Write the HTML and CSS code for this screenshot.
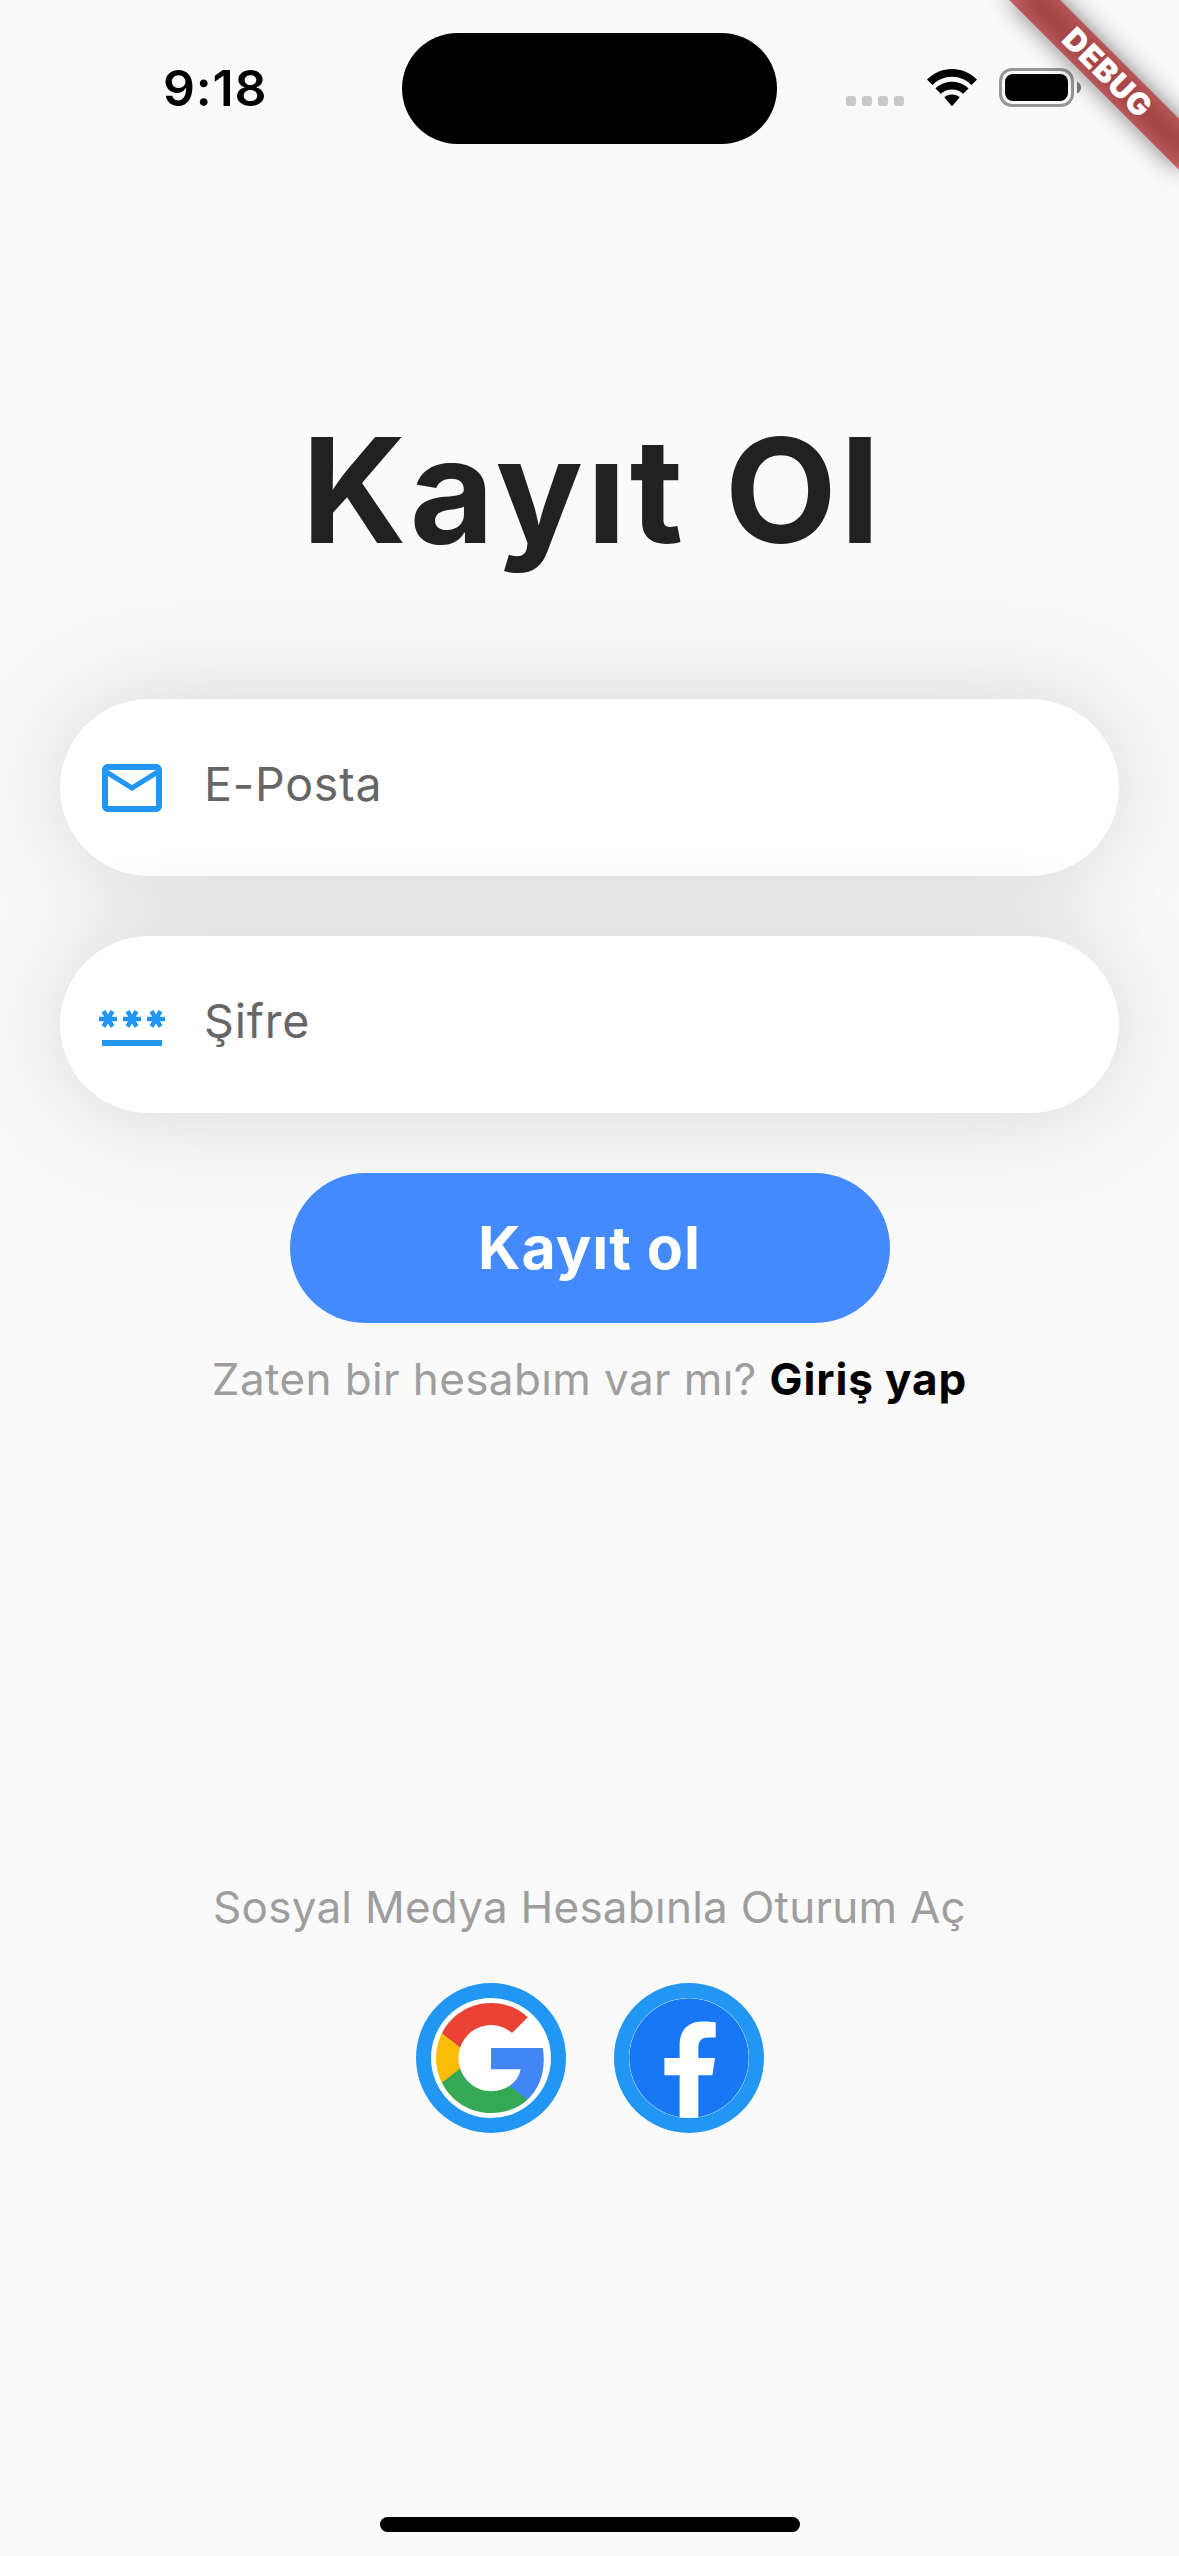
FILE: index.html
```html
<!DOCTYPE html>
<html lang="tr">
<head>
<meta charset="utf-8">
<title>Kayıt Ol</title>
<link rel="stylesheet" href="styles.css">
</head>
<body>
<div class="screen">
  <header class="status">
    <div class="status-time"><span>9:18</span></div>
    <div class="island"></div>
    <div class="status-icons">
      <div class="signal"><i></i><i></i><i></i><i></i></div>
      <svg class="wifi" viewBox="0 0 50 37">
        <path d="M0 10.6C6.8 3.7 15.5 0 25 0s18.200 3.700 25 10.600L44.600 16C39.300 10.700 32.400 7.700 25 7.700S10.700 10.700 5.400 16z"/>
        <path d="M8.500 19.400C13 15.200 18.700 12.800 25 12.800s12 2.400 16.500 6.600L36.200 24.700C33.100 21.900 29.200 20.400 25 20.400s-8.100 1.500-11.200 4.300z"/>
        <path d="M17.300 28.300C19.400 26.500 22.100 25.500 25 25.500s5.600 1 7.700 2.800L25.700 36.600Q25 37.200 24.300 36.600z"/>
      </svg>
      <svg class="battery" viewBox="0 0 82 39">
        <rect x="1.500" y="1.500" width="72" height="36" rx="11.500" fill="none" stroke="#969696" stroke-width="3"/>
        <rect x="6" y="6" width="63" height="27" rx="8"/>
        <path d="M78 13.500Q82 15.500 82 19.500T78 25.500z" fill="#7c7c7c"/>
      </svg>
    </div>
  </header>

  <main class="page">
    <h1 class="title">Kayıt Ol</h1>
    <label class="field">
      <svg class="field-icon" viewBox="0 0 24 24"><path d="M22 6c0-1.100-.9-2-2-2H4c-1.100 0-2 .9-2 2v12c0 1.100.9 2 2 2h16c1.100 0 2-.9 2-2V6zm-2 0l-8 5-8-5h16zm0 12H4V8l8 5 8-5v10z"/></svg>
      <span class="hint">E-Posta</span>
    </label>
    <label class="field">
      <svg class="field-icon" viewBox="0 0 24 24"><path d="M2 17h20v2H2v-2zm1.150-4.050L4 11.470l.85 1.480 1.300-.75-.85-1.480H7v-1.500H5.300l.85-1.470L4.850 7 4 8.470 3.150 7l-1.300.75.85 1.470H1v1.500h1.700l-.85 1.480 1.300.75zm6.700-.75l1.300.75.85-1.480.85 1.480 1.300-.75-.85-1.480H15v-1.500h-1.700l.85-1.470-1.300-.75L12 8.470 11.150 7l-1.300.75.85 1.470H9v1.500h1.700l-.85 1.480zM23 9.220h-1.700l.85-1.470-1.300-.75L20 8.470 19.150 7l-1.300.75.85 1.470H17v1.500h1.700l-.85 1.480 1.300.75.85-1.480.85 1.480 1.300-.75-.85-1.480H23v-1.500z"/></svg>
      <span class="hint">Şifre</span>
    </label>
    <button class="submit">Kayıt ol</button>
    <p class="login">Zaten bir hesabım var mı? <b>Giriş yap</b></p>

    <p class="social-title">Sosyal Medya Hesabınla Oturum Aç</p>
    <div class="social">
      <a class="social-button">
        <svg viewBox="0 0 24 24">
          <path fill="#4285f4" d="M22.560 12.250c0-.78-.07-1.530-.2-2.250H12v4.260h5.920c-.26 1.370-1.040 2.530-2.210 3.310v2.770h3.570c2.080-1.920 3.280-4.740 3.280-8.090z"/>
          <path fill="#34a853" d="M12 23c2.970 0 5.460-.98 7.280-2.660l-3.570-2.770c-.98.66-2.230 1.060-3.710 1.060-2.860 0-5.290-1.930-6.160-4.530H2.180v2.840C3.990 20.530 7.700 23 12 23z"/>
          <path fill="#fbbc05" d="M5.840 14.090c-.22-.66-.35-1.360-.35-2.090s.13-1.430.35-2.090V7.070H2.180C1.430 8.550 1 10.220 1 12s.43 3.450 1.180 4.930l3.660-2.840z"/>
          <path fill="#ea4335" d="M12 5.380c1.620 0 3.060.56 4.210 1.640l3.150-3.150C17.450 2.090 14.970 1 12 1 7.700 1 3.990 3.470 2.180 7.070l3.660 2.840c.87-2.600 3.300-4.530 6.160-4.530z"/>
        </svg>
      </a>
      <a class="social-button">
        <svg viewBox="0 0 24 24">
          <circle cx="12" cy="12" r="11.950" fill="#1877f2"/>
          <path fill="#fff" d="M16.670 15.470L17.200 12h-3.330V9.750c0-.95.47-1.870 1.960-1.870h1.510V4.850s-1.370-.15-2.690-.15c-2.740 0-4.530 1.660-4.530 4.670V12H7.080v3.470h3.040V24h3.750v-8.530z"/>
        </svg>
      </a>
    </div>
  </main>
  <div class="home-indicator"></div>
  <div class="ribbon">
    <div class="ribbon-shadow"></div>
    <div class="ribbon-band">DEBUG</div>
  </div>
</div>
</body>
</html>
```
FILE: styles.css
```css
* { box-sizing: border-box; }
body { margin: 0; }
.screen {
  position: relative;
  display: flex;
  flex-direction: column;
  align-items: center;
  width: 1179px;
  height: 2556px;
  overflow: hidden;
  background: #fafafa;
  font-family: Inter, "Liberation Sans", sans-serif;
}
.status {
  display: grid;
  grid-template-columns: 402px 375px 402px;
  width: 100%;
  height: 177px;
  padding-top: 33px;
}
.status-time {
  padding: 25px 0 0 163px;
  font-size: 50px;
  line-height: 60px;
  font-weight: 600;
  letter-spacing: 0.8px;
}
.island { height: 111px; border-radius: 56px; background: #000; }
.status-icons { display: flex; align-items: flex-start; padding: 35px 0 0 69px; }
.signal { display: flex; gap: 6px; padding-top: 28px; }
.signal i { width: 10px; height: 10px; border-radius: 3px; background: #c8c8c8; }
.wifi { width: 50px; height: 37px; margin: 1px 22px 0 23px; }
.battery { width: 82px; height: 39px; }

.page { display: flex; flex-direction: column; align-items: center; width: 100%; padding: 0 60px; }
.title {
  margin: 223px 0 119px;
  padding-left: 6px;
  font-size: 145.500px;
  line-height: 180px;
  font-weight: 700;
  letter-spacing: 3.600px;
  color: #212121;
}
.field {
  display: flex;
  align-items: center;
  width: 100%;
  height: 177px;
  margin-bottom: 60px;
  padding-left: 36px;
  border-radius: 89px;
  background: #fff;
  box-shadow: 0 0 107px rgba(0, 0, 0, 0.148);
}
.field-icon { width: 72px; height: 72px; fill: #2196f3; }
.hint { padding: 0 0 7px 36px; font-size: 46.500px; line-height: 56px; letter-spacing: 0.8px; color: #666; }
.submit {
  position: relative;
  width: 600px;
  height: 150px;
  padding: 0;
  border: 0;
  border-radius: 75px;
  background: #448aff;
  color: #fff;
  font: 700 59px/72px Inter, "Liberation Sans", sans-serif;
  letter-spacing: 1px;
}
.login, .social-title { margin: 0; font-size: 44px; line-height: 54px; color: #9e9e9e; white-space: nowrap; }
.login { margin-top: 29px; letter-spacing: 0.400px; }
.login b { font-weight: 700; letter-spacing: 0.9px; color: #000; }
.social-title { margin-top: 474px; letter-spacing: 0.250px; }
.social { display: flex; gap: 48px; margin-top: 49px; }
.social-button { width: 150px; height: 150px; padding: 15px; border-radius: 50%; background: #2196f3; }
.social-button svg { display: block; width: 120px; height: 120px; border-radius: 50%; background: #fff; }
.home-indicator { width: 420px; height: 15px; margin-top: auto; margin-bottom: 24px; border-radius: 8px; background: #000; }

/* Corner ribbon laid over the status bar */
.ribbon { position: absolute; top: 0; left: 1179px; width: 0; height: 0; transform: rotate(45deg); }
.ribbon-shadow, .ribbon-band { position: absolute; left: -120px; top: 84px; width: 240px; height: 36px; }
.ribbon-shadow { background: rgba(0, 0, 0, 0.500); filter: blur(12px); }
.ribbon-band {
  padding-left: 2px;
  background: rgba(183, 28, 28, 0.627);
  color: #fff;
  font-size: 31px;
  line-height: 35px;
  font-weight: 900;
  letter-spacing: 0.8px;
  text-align: center;
}
```
